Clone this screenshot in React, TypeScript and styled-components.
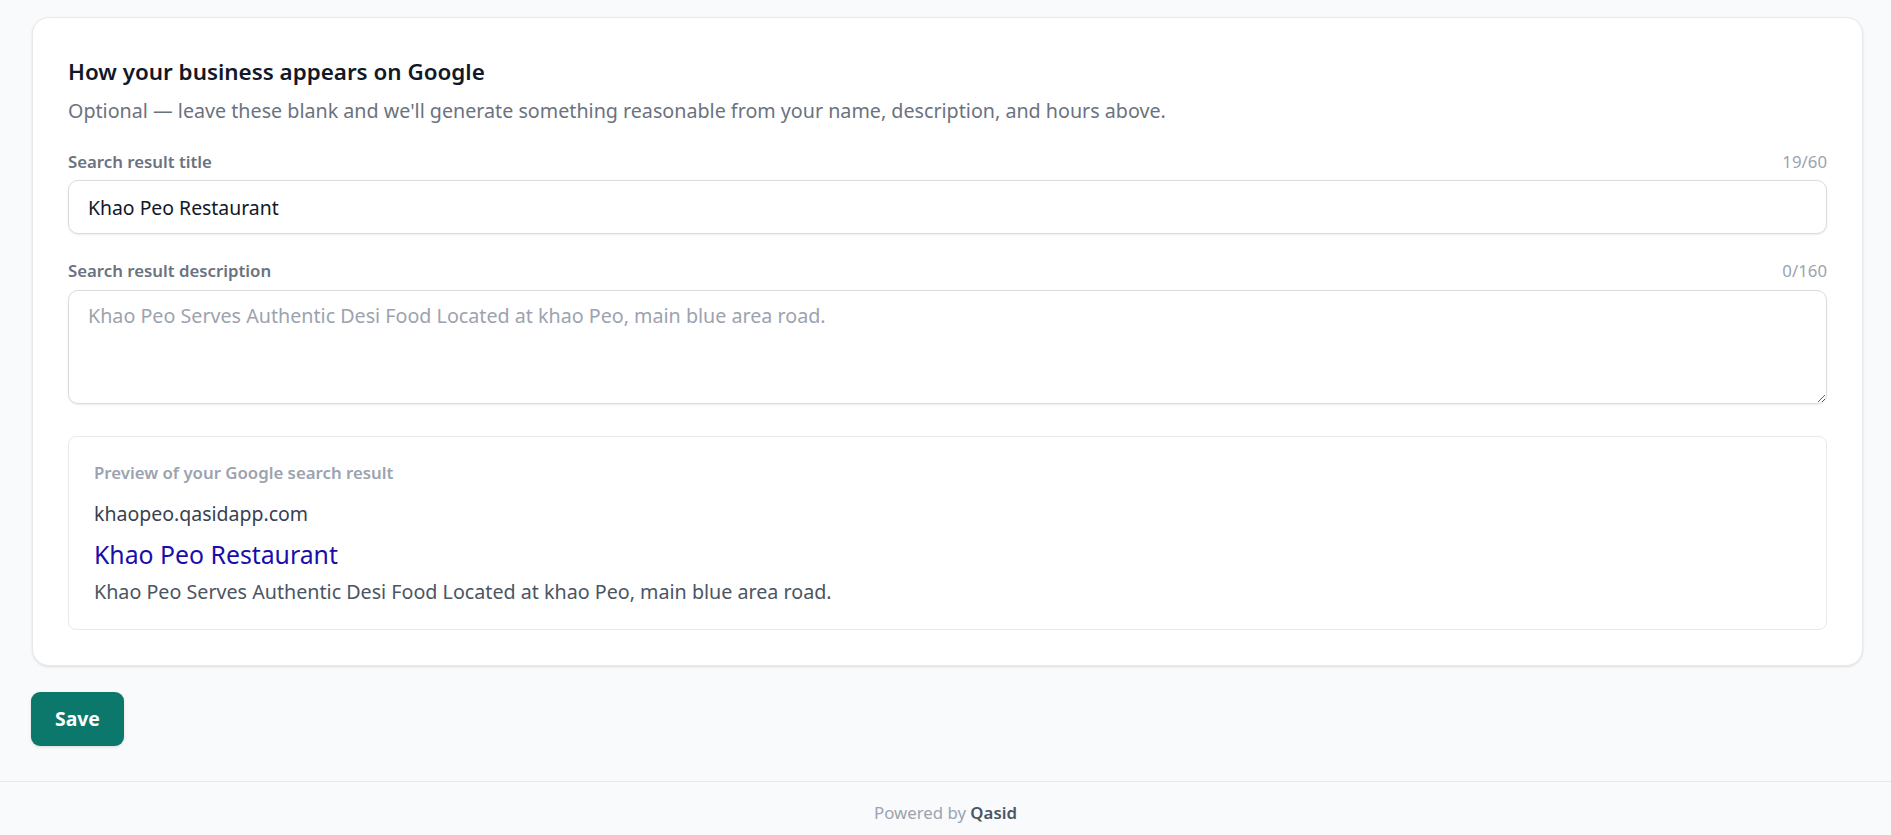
import styled, { createGlobalStyle } from "styled-components";

const GlobalStyle = createGlobalStyle`
  html, body {
    margin: 0;
    padding: 0;
    background: #f9fafb;
  }
  body {
    font-family: "Noto Sans", "Open Sans", sans-serif;
    color: #111827;
  }
  * {
    box-sizing: border-box;
  }
`;

const TITLE_MAX = 60;
const DESC_MAX = 160;

export default function App() {
  const title = "Khao Peo Restaurant";
  const description = "";
  const fallbackDescription =
    "Khao Peo Serves Authentic Desi Food Located at khao Peo, main blue area road.";

  return (
    <>
      <GlobalStyle />
      <Page>
        <Main>
          <Card>
            <Heading>How your business appears on Google</Heading>
            <Subtitle>
              Optional — leave these blank and we'll generate something reasonable from your
              name, description, and hours above.
            </Subtitle>

            <Field>
              <LabelRow>
                <Label htmlFor="seo-title">Search result title</Label>
                <Counter>
                  {title.length}/{TITLE_MAX}
                </Counter>
              </LabelRow>
              <TextInput id="seo-title" defaultValue={title} maxLength={TITLE_MAX} />
            </Field>

            <Field>
              <LabelRow>
                <Label htmlFor="seo-desc">Search result description</Label>
                <Counter>
                  {description.length}/{DESC_MAX}
                </Counter>
              </LabelRow>
              <TextArea
                id="seo-desc"
                defaultValue={description}
                placeholder={fallbackDescription}
                maxLength={DESC_MAX}
              />
            </Field>

            <Preview>
              <PreviewLabel>Preview of your Google search result</PreviewLabel>
              <PreviewUrl>khaopeo.qasidapp.com</PreviewUrl>
              <PreviewTitle>{title}</PreviewTitle>
              <PreviewDesc>{description || fallbackDescription}</PreviewDesc>
            </Preview>
          </Card>

          <SaveButton type="button">Save</SaveButton>
        </Main>

        <Footer>
          Powered by <strong>Qasid</strong>
        </Footer>
      </Page>
    </>
  );
}

const Page = styled.div`
  min-height: 100vh;
  display: flex;
  flex-direction: column;
`;

const Main = styled.main`
  padding: 17px 28px 35px 32px;
  display: flex;
  flex-direction: column;
  align-items: flex-start;
`;

const Card = styled.section`
  width: 100%;
  background: #fff;
  border: 1px solid #e7e9ec;
  border-radius: 17px;
  box-shadow: 0 1px 3px rgba(0, 0, 0, 0.08), 0 1px 2px rgba(0, 0, 0, 0.04);
  padding: 38px 35px 35px;
`;

const Heading = styled.h2`
  margin: 0;
  font-size: 22.4px;
  line-height: 32px;
  font-weight: 600;
  color: #111827;
`;

const Subtitle = styled.p`
  margin: 9px 0 0;
  font-size: 19.7px;
  line-height: 28.8px;
  color: #6b7280;
`;

const Field = styled.div`
  margin-top: 23.5px;
  display: flex;
  flex-direction: column;
  gap: 6px;

  & + & {
    margin-top: 24px;
  }
`;

const LabelRow = styled.div`
  display: flex;
  justify-content: space-between;
  align-items: baseline;
  font-size: 16.8px;
  line-height: 1.5;
`;

const Label = styled.label`
  font-weight: 600;
  color: #6b7280;
`;

const Counter = styled.span`
  color: #9ca3af;
`;

const controlStyles = `
  width: 100%;
  font-family: "Noto Sans", "Open Sans", sans-serif;
  font-size: 19.4px;
  line-height: 28.8px;
  color: #111827;
  background: #fff;
  border: 1px solid #d9dce0;
  border-radius: 10px;
  box-shadow: 0 1px 2px rgba(0, 0, 0, 0.08);
  padding: 11.5px 19px;
  outline: none;

  &::placeholder {
    color: #9ca3af;
  }
`;

const TextInput = styled.input`
  ${controlStyles}
  height: 54px;
`;

const TextArea = styled.textarea`
  ${controlStyles}
  display: block;
  height: 114px;
  font-size: 19.7px;
  resize: vertical;
`;

const Preview = styled.div`
  margin-top: 32.5px;
  border: 1px solid #e7e9ec;
  border-radius: 8px;
  padding: 23px 25px;
`;

const PreviewLabel = styled.div`
  font-size: 16.8px;
  line-height: 1.5;
  font-weight: 600;
  color: #9ca3af;
  margin-bottom: 14.5px;
`;

const PreviewUrl = styled.div`
  font-size: 19.5px;
  line-height: 28.8px;
  color: #374151;
`;

const PreviewTitle = styled.div`
  margin-top: 7px;
  font-size: 24.8px;
  line-height: 36px;
  color: #1a0dab;
`;

const PreviewDesc = styled.div`
  margin-top: 6px;
  font-size: 19.7px;
  line-height: 28.8px;
  color: #4b5563;
`;

const SaveButton = styled.button`
  margin-top: 26px;
  margin-left: -1px;
  font-family: "Noto Sans", "Open Sans", sans-serif;
  font-size: 19.4px;
  line-height: 28.8px;
  font-weight: 700;
  color: #fff;
  background: #0c776b;
  border: none;
  border-radius: 9px;
  padding: 12.6px 24px;
  box-shadow: 0 1px 3px rgba(0, 0, 0, 0.12);
  cursor: pointer;
`;

const Footer = styled.footer`
  border-top: 1px solid #e5e7eb;
  padding: 18px 16px;
  text-align: center;
  font-size: 16.8px;
  line-height: 1.5;
  color: #9ca3af;

  strong {
    font-weight: 600;
    color: #4b5563;
  }
`;
